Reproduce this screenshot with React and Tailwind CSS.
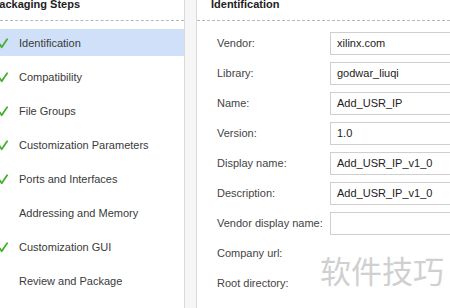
import React from "react";

const steps = [
  { label: "Identification", done: true, active: true },
  { label: "Compatibility", done: true },
  { label: "File Groups", done: true },
  { label: "Customization Parameters", done: true },
  { label: "Ports and Interfaces", done: true },
  { label: "Addressing and Memory", done: false },
  { label: "Customization GUI", done: true },
  { label: "Review and Package", done: false },
];

const fields = [
  ["Vendor:", "xilinx.com"],
  ["Library:", "godwar_liuqi"],
  ["Name:", "Add_USR_IP"],
  ["Version:", "1.0"],
  ["Display name:", "Add_USR_IP_v1_0"],
  ["Description:", "Add_USR_IP_v1_0"],
  ["Vendor display name:", ""],
  ["Company url:", null],
  ["Root directory:", null],
  ["Xml file name:", null],
];

function Check() {
  return (
    <svg viewBox="0 0 10 11" className="h-[11px] w-[9px]" aria-hidden="true">
      <path
        d="M0.8 6.2 L3 9.6 L9 0.8"
        fill="none"
        stroke="#45b02f"
        strokeWidth="2"
        strokeLinecap="round"
        strokeLinejoin="round"
      />
    </svg>
  );
}

export default function App() {
  return (
    <div
      className="relative flex h-[308px] w-[450px] overflow-hidden bg-white text-[11px] text-[#3a3a3a]"
      style={{ fontFamily: '"Liberation Sans", Arial, sans-serif' }}
    >
      <section className="flex w-[185px] shrink-0 flex-col overflow-hidden border-r border-[#dadada] bg-white">
        <div className="h-[21px] shrink-0 border-b border-dashed border-[#b8b8b8]">
          <p className="-ml-[8px] -mt-[2px] whitespace-nowrap text-[11px] font-bold leading-[13px] text-[#222]">
            Packaging Steps
          </p>
        </div>
        <div className="mt-[8px] flex flex-col gap-[7px]">
          {steps.map((step) => (
            <div
              key={step.label}
              className={`flex h-[27px] items-center pt-[1px] ${step.active ? "bg-[#cfe0f8]" : ""}`}
            >
              <span className="-ml-[1px] flex w-[20px] shrink-0">
                {step.done ? <Check /> : null}
              </span>
              <span className="whitespace-nowrap">{step.label}</span>
            </div>
          ))}
        </div>
      </section>

      <div className="w-[11px] shrink-0 bg-[#f6f6f6]" />

      <section className="flex min-w-0 flex-1 flex-col border-l border-[#dadada] bg-white">
        <div className="h-[21px] shrink-0 border-b border-dashed border-[#b8b8b8] pl-[14px]">
          <p className="-mt-[2px] whitespace-nowrap text-[11px] font-bold leading-[13px] text-[#222]">
            Identification
          </p>
        </div>
        <div className="mt-[11px] flex flex-col gap-[7px] pl-[20px]">
          {fields.map(([label, value]) => (
            <div key={label} className="flex h-[23px] items-center">
              <span className="w-[113px] shrink-0 whitespace-nowrap text-[#444]">
                {label}
              </span>
              {value !== null ? (
                <div className="flex h-[23px] w-[140px] shrink-0 items-center border border-[#cfcfcf] bg-white pl-[6px] text-[#222]">
                  {value}
                </div>
              ) : null}
            </div>
          ))}
        </div>
      </section>

      <div
        className="pointer-events-none absolute left-[320px] top-[252px] whitespace-nowrap text-[31px] leading-[36px] text-[#d0d0d0]"
        style={{ fontFamily: '"Noto Sans CJK SC", sans-serif' }}
      >
        软件技巧
      </div>
    </div>
  );
}
